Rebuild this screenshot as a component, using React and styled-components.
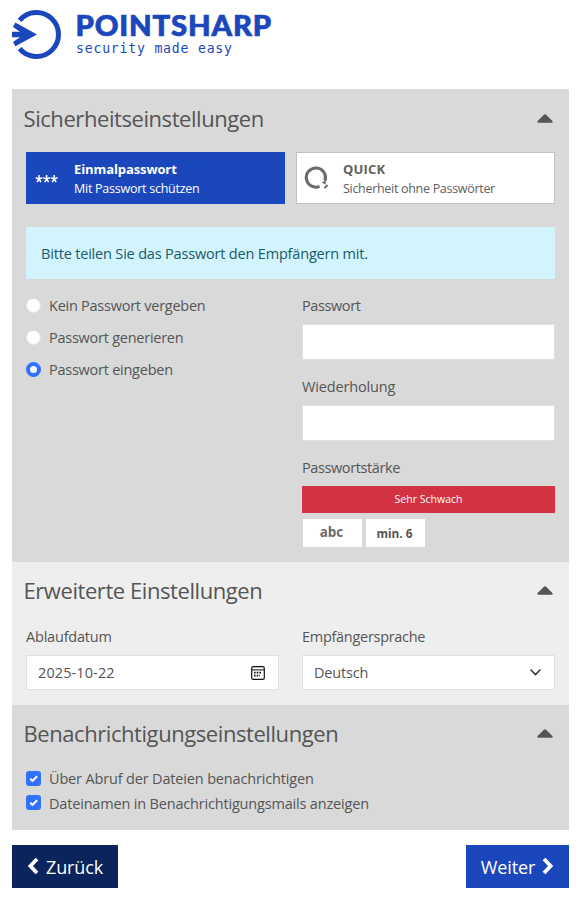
import React, { useState } from "react";
import styled, { createGlobalStyle } from "styled-components";

const GlobalStyle = createGlobalStyle`
  * {
    box-sizing: border-box;
  }
  body {
    margin: 0;
    background: #fff;
    color: #555;
    font-family: "Segoe UI", "Open Sans", sans-serif;
    font-size: 15px;
  }
`;

const Page = styled.div`
  width: 581px;
  height: 922px;
  padding: 0 12px;
  overflow: hidden;
`;

const Header = styled.header`
  height: 89px;
`;

const Logo = styled.svg`
  display: block;
  width: 270px;
  height: 70px;
`;

const Section = styled.section`
  height: ${(p) => p.$height}px;
  padding: 0 14px;
  background: ${(p) => (p.$light ? "#eeeeee" : "#d9d9d9")};
`;

const SectionHead = styled.div`
  display: flex;
  align-items: center;
  justify-content: space-between;
  height: ${(p) => p.$height || 57}px;
  padding-right: 2px;
`;

const Title = styled.h2`
  margin: -1px 0 0 -2.5px;
  font-size: 22px;
  font-weight: 400;
  line-height: 30px;
  letter-spacing: -0.43px;
`;

const Label = styled.span`
  white-space: nowrap;
  font-size: 14.5px;
  line-height: 22px;
  letter-spacing: ${(p) => p.$spacing || 0}px;
`;

const Tabs = styled.div`
  display: grid;
  grid-template-columns: 259px 259px;
  gap: 11px;
  margin-top: 4px;
`;

const Tab = styled.button`
  display: flex;
  align-items: center;
  height: 52px;
  padding: 0 0 0 7px;
  border: 1px solid ${(p) => (p.$active ? "#1b47bd" : "#c1c1c1")};
  background: ${(p) => (p.$active ? "#1b47bd" : "#fff")};
  color: ${(p) => (p.$active ? "#fff" : "#606060")};
  font-family: inherit;
  text-align: left;
  cursor: pointer;
`;

const TabIcon = styled.svg`
  flex: none;
  width: 26px;
  height: 26px;
  margin-right: ${(p) => p.$gap || 13}px;
`;

const TabText = styled.span`
  display: flex;
  flex-direction: column;
  padding-top: 2px;
  white-space: nowrap;
  font-size: 12.5px;
  line-height: 20px;
  letter-spacing: ${(p) => p.$spacing}px;
`;

const TabName = styled.b`
  font-size: 13px;
  font-weight: 700;
  letter-spacing: ${(p) => p.$spacing}px;
`;

const Notice = styled.div`
  display: flex;
  align-items: center;
  height: 52px;
  margin-top: 23px;
  padding: 1px 15px 0;
  background: #d2f4fd;
  color: #1a5a6b;
`;

const Columns = styled.div`
  display: grid;
  grid-template-columns: 253px 253px;
  gap: 23px;
  margin-top: ${(p) => p.$top}px;
`;

const Column = styled.div`
  display: flex;
  flex-direction: column;
  padding-top: ${(p) => p.$top || 0}px;
`;

const Choice = styled.label`
  display: flex;
  align-items: center;
  gap: 8px;
  height: ${(p) => p.$height}px;
  cursor: pointer;
`;

const Radio = styled.input`
  appearance: none;
  width: 15px;
  height: 15px;
  margin: -1px 0 0;
  border: 1px solid #e2e4e6;
  border-radius: 50%;
  background: #fff;

  &:checked {
    border: 4px solid #3071ff;
  }
`;

const CheckIcon = styled.svg`
  flex: none;
  width: 15px;
  height: 15px;
  margin-top: ${(p) => p.$top || 0}px;
`;

const Field = styled.div`
  display: flex;
  flex-direction: column;
  height: 81px;
`;

const FieldLabel = styled(Label)`
  height: 30px;
  padding-top: 1px;
`;

const Input = styled.input`
  width: 100%;
  height: 36px;
  padding: 0 12px;
  border: 1px solid #dee0e5;
  border-radius: 0;
  outline: none;
`;

const Control = styled.div`
  display: flex;
  align-items: center;
  justify-content: space-between;
  height: 35px;
  padding: 0 13px 0 11px;
  border: 1px solid #dee0e5;
  background: #fff;
`;

const Strength = styled.div`
  height: 27px;
  background: #d33243;
  color: #fff;
  font-size: 10.5px;
  line-height: 27px;
  letter-spacing: 0.02px;
  text-align: center;
`;

const Rules = styled.div`
  display: flex;
  gap: 4px;
  margin: 6px 0 0 1px;
`;

const Rule = styled.span`
  width: 59px;
  height: 28px;
  padding-right: 2px;
  background: #fff;
  color: ${(p) => (p.$large ? "#6b6b6b" : "#555")};
  font-size: ${(p) => (p.$large ? 13.5 : 11.8)}px;
  font-weight: 700;
  line-height: ${(p) => (p.$large ? 27 : 29)}px;
  text-align: center;
`;

const Footer = styled.footer`
  display: flex;
  justify-content: space-between;
  margin-top: 15px;
`;

const Button = styled.button`
  display: flex;
  align-items: center;
  justify-content: center;
  gap: 7px;
  width: ${(p) => (p.$primary ? 103 : 106)}px;
  height: 43px;
  padding: 0;
  border: 0;
  background: ${(p) => (p.$primary ? "#1b47bd" : "#0b245c")};
  color: #fff;
  font-family: inherit;
  font-size: 18px;
  letter-spacing: -0.15px;
  cursor: pointer;

  svg {
    margin-top: -2px;
  }
`;

function Brand() {
  return (
    <Logo viewBox="12 0 270 70" fill="#1b47bd">
      <path d="M19.6 20.4A22 22 0 1 1 19.6 48.6" fill="none" stroke="#1b47bd" strokeWidth="5" />
      <path d="M15.3 22.6 37 34.4 15.3 46.2 13 42 20 37.2H12V31.8H20L13 26.9Z" />
      <text x="75.5" y="36.2" fontFamily="Lato" fontWeight="900" fontSize="27.6" letterSpacing="0.8" textLength="196.5" lengthAdjust="spacingAndGlyphs" stroke="#1b47bd" strokeWidth="0.7">POINTSHARP</text>
      <text x="76" y="53" fontFamily="DejaVu Sans Mono" fontSize="13.2" textLength="156">security made easy</text>
    </Logo>
  );
}

function Caret() {
  return (
    <svg width="16" height="9" viewBox="0 0 16 9">
      <path d="M7.1.5Q8-.2 8.9.5L15.4 7Q16.2 8.6 14.7 8.7H1.3Q-.2 8.6.6 7Z" fill="#555" />
    </svg>
  );
}

function Chevron({ left }) {
  return (
    <svg width="12" height="18" viewBox="0 0 12 18">
      <path d={left ? "M10 2 3.4 9l6.6 7" : "M2 2 8.6 9 2 16"} fill="none" stroke="#fff" strokeWidth="3.8" />
    </svg>
  );
}

function Check({ text, spacing, height, top }) {
  return (
    <Choice $height={height}>
      <CheckIcon $top={top} viewBox="0 0 15 15">
        <rect width="15" height="15" rx="3" fill="#3071ff" />
        <path d="m4.2 7.7 2.3 2.2 4.6-4.6" fill="none" stroke="#fff" strokeWidth="2" />
      </CheckIcon>
      <Label $spacing={spacing}>{text}</Label>
    </Choice>
  );
}

const modes = [
  { id: "none", text: "Kein Passwort vergeben" },
  { id: "generate", text: "Passwort generieren" },
  { id: "enter", text: "Passwort eingeben" },
];

function App() {
  const [mode, setMode] = useState("enter");

  return (
    <Page>
      <GlobalStyle />
      <Header>
        <Brand />
      </Header>

      <Section $height={473}>
        <SectionHead $height={59}>
          <Title>Sicherheitseinstellungen</Title>
          <Caret />
        </SectionHead>
        <Tabs>
          <Tab $active>
            <TabIcon $gap={14} viewBox="0 0 26 26">
              <path d="M5 10v4M1.6 12.8 5 14l3.4-1.2M3 17.2 5 14l2 3.2M12.6 10v4M9.2 12.8l3.4 1.2 3.4-1.2M10.6 17.2l2-3.2 2 3.2M20.2 10v4M16.8 12.8l3.4 1.2 3.4-1.2M18.2 17.2l2-3.2 2 3.2" fill="none" stroke="#fff" strokeWidth="1.5" />
            </TabIcon>
            <TabText $spacing={-0.25}>
              <TabName $spacing={-0.1}>Einmalpasswort</TabName>
              Mit Passwort schützen
            </TabText>
          </Tab>
          <Tab>
            <TabIcon viewBox="0 0 26 26" fill="none" stroke="#6b6b6b">
              <path d="M15.6 21.4A9.6 9.6 0 1 1 21 15.6" strokeWidth="3.1" />
              <path d="m18.4 17 2.4 1.2.2-3" strokeWidth="1.8" />
              <path d="m20.4 23 3.2-3" strokeWidth="2" />
            </TabIcon>
            <TabText $spacing={-0.3}>
              <TabName $spacing={0.2}>QUICK</TabName>
              Sicherheit ohne Passwörter
            </TabText>
          </Tab>
        </Tabs>
        <Notice>
          <Label $spacing={-0.18}>Bitte teilen Sie das Passwort den Empfängern mit.</Label>
        </Notice>
        <Columns $top={11}>
          <Column>
            {modes.map((m) => (
              <Choice key={m.id} $height={32}>
                <Radio type="radio" name="mode" checked={mode === m.id} onChange={() => setMode(m.id)} />
                <Label $spacing={-0.25}>{m.text}</Label>
              </Choice>
            ))}
          </Column>
          <Column $top={4}>
            <Field>
              <FieldLabel $spacing={-0.4}>Passwort</FieldLabel>
              <Input type="password" />
            </Field>
            <Field>
              <FieldLabel $spacing={-0.15}>Wiederholung</FieldLabel>
              <Input type="password" />
            </Field>
            <FieldLabel $spacing={-0.4}>Passwortstärke</FieldLabel>
            <Strength>Sehr Schwach</Strength>
            <Rules>
              <Rule $large>abc</Rule>
              <Rule>min. 6</Rule>
            </Rules>
          </Column>
        </Columns>
      </Section>

      <Section $light $height={143}>
        <SectionHead>
          <Title>Erweiterte Einstellungen</Title>
          <Caret />
        </SectionHead>
        <Columns $top={6}>
          <Field>
            <FieldLabel $spacing={-0.2}>Ablaufdatum</FieldLabel>
            <Control>
              <Label $spacing={0.1}>2025-10-22</Label>
              <svg width="14" height="14" viewBox="0 0 14 14">
                <rect x=".7" y=".7" width="12.6" height="12.6" rx="1.6" fill="none" stroke="#111" strokeWidth="1.2" />
                <path d="M1 3.9h12" stroke="#111" />
                <path d="M3 6.6h8M3 9.6h6" stroke="#111" strokeWidth="1.6" strokeDasharray="1.6 1.1" />
              </svg>
            </Control>
          </Field>
          <Field>
            <FieldLabel $spacing={-0.29}>Empfängersprache</FieldLabel>
            <Control>
              <Label $spacing={-0.2}>Deutsch</Label>
              <svg width="11" height="7" viewBox="0 0 11 7">
                <path d="m1 1 4.5 4.5L10 1" fill="none" stroke="#343a40" strokeWidth="1.6" strokeLinecap="round" />
              </svg>
            </Control>
          </Field>
        </Columns>
      </Section>

      <Section $height={125}>
        <SectionHead>
          <Title>Benachrichtigungseinstellungen</Title>
          <Caret />
        </SectionHead>
        <Columns $top={3}>
          <Column>
            <Check height={27} top={-1} spacing={-0.16} text="Über Abruf der Dateien benachrichtigen" />
            <Check height={23} top={-2} spacing={-0.18} text="Dateinamen in Benachrichtigungsmails anzeigen" />
          </Column>
        </Columns>
      </Section>

      <Footer>
        <Button>
          <Chevron left />
          Zurück
        </Button>
        <Button $primary>
          Weiter
          <Chevron />
        </Button>
      </Footer>
    </Page>
  );
}

export default App;
